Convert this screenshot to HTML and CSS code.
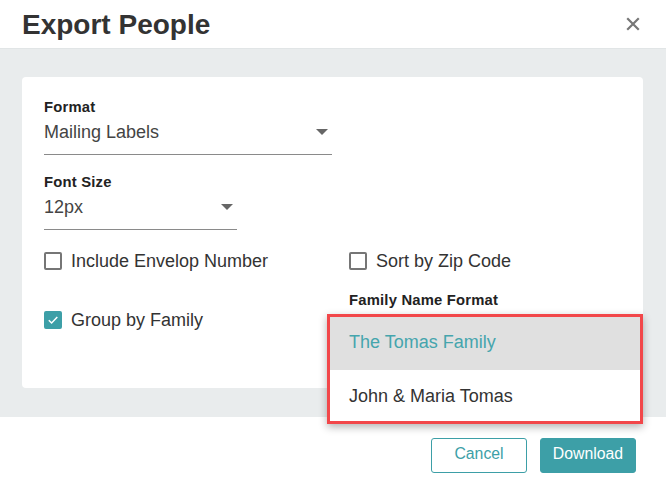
FILE: index.html
```html
<!DOCTYPE html>
<html>
<head>
<meta charset="utf-8">
<link rel="stylesheet" href="styles.css">
</head>
<body>
<div class="dialog">
  <header class="head">
    <h1 class="title">Export People</h1>
    <button class="close" aria-label="Close">
      <svg width="14" height="14" viewBox="0 0 14 14"><path d="M2 2L12 12M12 2L2 12" stroke="#777" stroke-width="2.2" stroke-linecap="square"/></svg>
    </button>
  </header>
  <main class="body">
    <section class="card">
      <div class="field field-format">
        <div class="label">Format</div>
        <div class="select">
          <span>Mailing Labels</span>
          <span class="caret"></span>
        </div>
      </div>
      <div class="field field-size">
        <div class="label">Font Size</div>
        <div class="select select-small">
          <span>12px</span>
          <span class="caret"></span>
        </div>
      </div>
      <div class="checks">
        <label class="check"><span class="box"></span>Include Envelop Number</label>
        <label class="check"><span class="box"></span>Sort by Zip Code</label>
      </div>
      <div class="row-family">
        <label class="check check-group"><span class="box box-on"><svg width="12" height="10" viewBox="0 0 12 10"><path d="M1.8 5.2L4.6 8L10.3 2" fill="none" stroke="#fff" stroke-width="1.5"/></svg></span>Group by Family</label>
        <div class="family-field">
          <div class="label">Family Name Format</div>
          <div class="family-select"></div>
        </div>
      </div>
      <ul class="menu">
        <li class="opt opt-active">The Tomas Family</li>
        <li class="opt">John &amp; Maria Tomas</li>
      </ul>
    </section>
  </main>
  <footer class="foot">
    <button class="btn btn-cancel">Cancel</button>
    <button class="btn btn-primary">Download</button>
  </footer>
</div>
</body>
</html>
```

FILE: styles.css
```css
* { box-sizing: border-box; }
html, body { margin: 0; padding: 0; background: #fff; }
body {
  font-family: "Liberation Sans", Arial, sans-serif;
  color: #333;
  width: 666px;
  height: 491px;
  overflow: hidden;
}
.dialog { display: flex; flex-direction: column; height: 491px; }
.head {
  height: 49px;
  display: flex;
  align-items: center;
  justify-content: space-between;
  padding: 0 26px 0 22px;
  border-bottom: 1px solid #e1e5e6;
}
.title {
  margin: 0;
  font-size: 28px;
  font-weight: 700;
  color: #333;
  line-height: 32px;
  padding-top: 1px;
}
.close {
  border: 0;
  background: none;
  padding: 0;
  width: 14px;
  height: 14px;
  display: flex;
}
.body {
  background: #e9eced;
  padding: 28px 23px 29px 22px;
  height: 368px;
}
.card {
  position: relative;
  background: #fff;
  border-radius: 4px;
  height: 311px;
  padding: 22px 22px 0 22px;
}
.label {
  font-size: 14.8px;
  font-weight: 700;
  color: #222;
  line-height: 17px;
  letter-spacing: 0.2px;
}
.select {
  display: flex;
  align-items: center;
  justify-content: space-between;
  font-size: 18px;
  line-height: 22px;
  color: #444;
  padding: 5px 4px 11px 0;
  border-bottom: 1px solid #8a8a8a;
  width: 288px;
}
.select-small { width: 193px; }
.caret {
  width: 0;
  height: 0;
  border-left: 6px solid transparent;
  border-right: 6px solid transparent;
  border-top: 6px solid #666;
}
.field-size { margin-top: 19px; }
.checks {
  margin-top: 20px;
  display: grid;
  grid-template-columns: 305px 1fr;
}
.check {
  display: flex;
  align-items: center;
  gap: 9px;
  font-size: 18px;
  line-height: 22px;
  color: #333;
}
.box {
  width: 18px;
  height: 18px;
  border: 2px solid #767676;
  border-radius: 2px;
  display: flex;
  align-items: center;
  justify-content: center;
}
.box-on { background: #3d9fa7; border-color: #3d9fa7; }
.row-family {
  margin-top: 20px;
  display: grid;
  grid-template-columns: 305px 1fr;
}
.check-group { align-self: start; margin-top: 17px; }
.family-select { height: 38px; }
.menu {
  position: absolute;
  left: 305px;
  top: 237px;
  width: 316px;
  margin: 0;
  padding: 0;
  list-style: none;
  background: #fff;
  border: 3px solid #f2474a;
  box-shadow: 0 3px 8px rgba(0,0,0,0.3);
}
.opt {
  font-size: 18px;
  line-height: 22px;
  padding: 0 19px 0 19px;
  color: #333;
  height: 51px;
  display: flex;
  align-items: center;
}
.opt-active {
  background: #e0e0e0;
  color: #45a5ad;
  height: 53px;
  padding-bottom: 4px;
}
.foot {
  display: flex;
  justify-content: flex-end;
  gap: 13px;
  padding: 21px 30px 0 0;
}
.btn {
  font-family: "Liberation Sans", Arial, sans-serif;
  font-size: 15.8px;
  height: 35px;
  border-radius: 3px;
  padding: 0 0 3px 0;
  cursor: pointer;
}
.btn-cancel {
  width: 96px;
  background: #fff;
  color: #3d9fa7;
  border: 1px solid #3d9fa7;
}
.btn-primary {
  width: 96px;
  background: #3d9fa7;
  color: #fff;
  border: 1px solid #3d9fa7;
}
```
